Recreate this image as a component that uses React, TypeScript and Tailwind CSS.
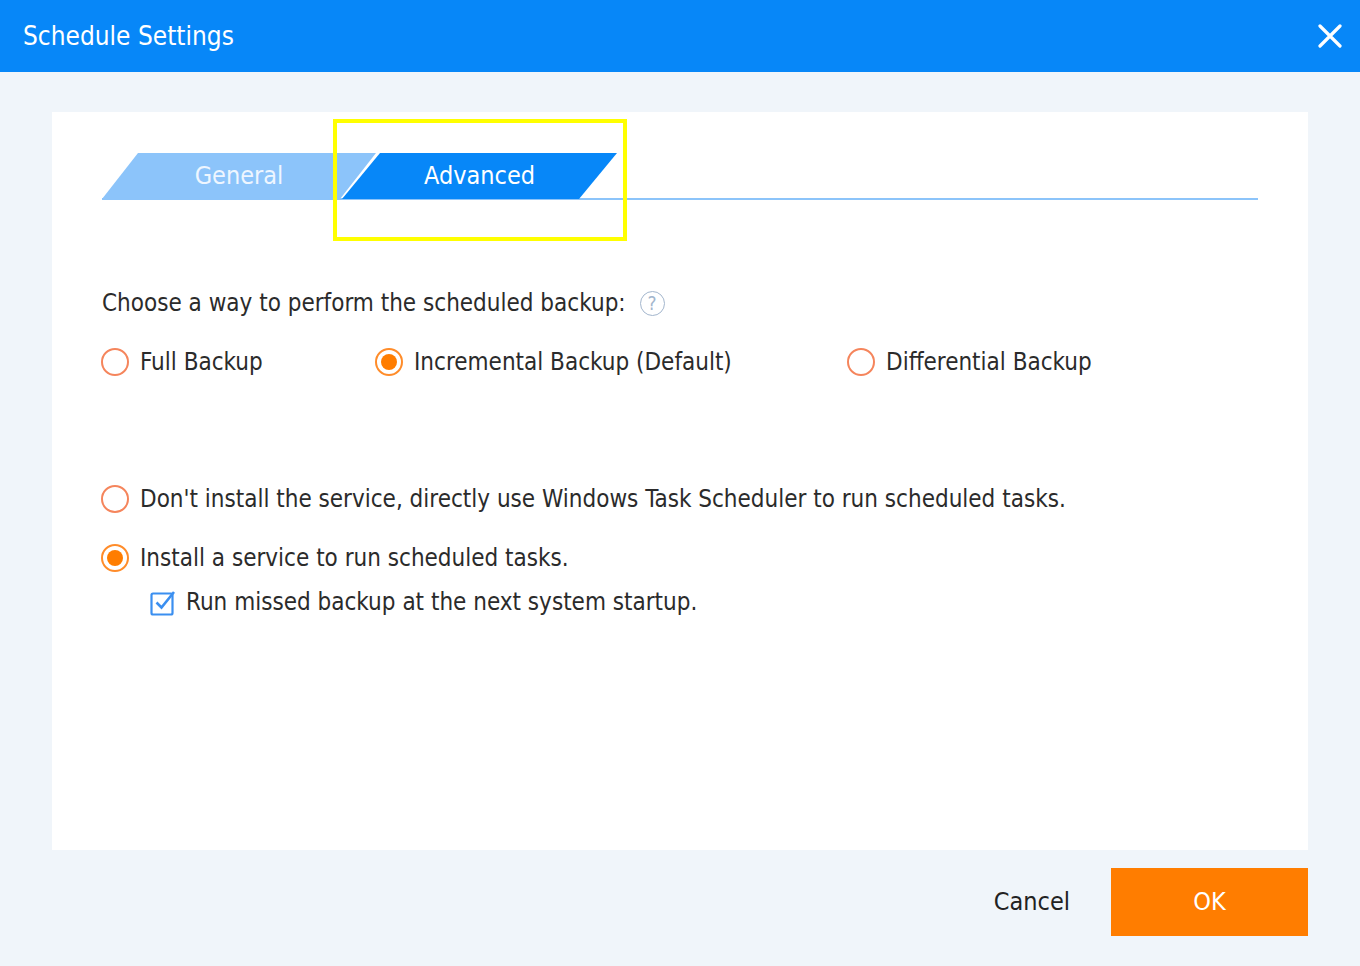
import React from "react";

const font = { fontFamily: '"DejaVu Sans", Verdana, sans-serif' };

function Radio({ checked }: { checked?: boolean }) {
  return checked ? (
    <span className="flex h-[28px] w-[28px] shrink-0 items-center justify-center rounded-full border-2 border-[#ff8c2a] bg-white">
      <span className="h-[16px] w-[16px] rounded-full bg-[#ff7d00]" />
    </span>
  ) : (
    <span className="h-[28px] w-[28px] shrink-0 rounded-full border-2 border-[#f5855c] bg-white" />
  );
}

function Checkbox() {
  return (
    <svg width="27" height="27" viewBox="0 0 27 27" className="shrink-0">
      <rect x="1.5" y="4.5" width="21" height="21" rx="1.5" fill="none" stroke="#3b8ff0" strokeWidth="2.2" />
      <path d="M6.5 13.5 L11.5 18.5 L24 3" fill="none" stroke="#3b8ff0" strokeWidth="2.6" />
    </svg>
  );
}

export default function App() {
  return (
    <div
      className="flex h-[966px] w-[1360px] flex-col bg-[#f0f5fa] font-stretch-condensed text-[#2b2b2b]"
      style={font}
    >
      <div className="flex h-[72px] shrink-0 items-center justify-between bg-[#0787f8] pl-[23px] pr-[18px]">
        <span className="text-[26px] leading-none text-white">Schedule Settings</span>
        <svg width="24" height="24" viewBox="0 0 24 24">
          <path d="M2 2 L22 22 M22 2 L2 22" stroke="white" strokeWidth="3.2" strokeLinecap="round" />
        </svg>
      </div>

      <div className="px-[52px] pt-[40px]">
        <div className="relative h-[738px] bg-white px-[50px] pt-[41px]">
          {/* Tabs */}
          <div className="flex h-[47px] border-b-2 border-[#8cc4fa]">
            <div className="flex h-[46px] w-[274px] items-center justify-center bg-[#8cc4fa] text-[25px] text-[#eef6ff] [clip-path:polygon(36px_0,100%_0,calc(100%-36px)_100%,0_100%)]">
              General
            </div>
            <div className="-ml-[34px] flex h-[46px] w-[275px] items-center justify-center bg-[#0787f8] text-[25px] text-white [clip-path:polygon(38px_0,100%_0,calc(100%-38px)_100%,0_100%)]">
              Advanced
            </div>
          </div>

          <div className="pointer-events-none absolute left-[281px] top-[7px] h-[122px] w-[294px] border-4 border-[#ffff00]" />

          <div className="mt-[88px] flex h-[30px] items-center text-[24px]">
            <span>Choose a way to perform the scheduled backup:</span>
            <span className="ml-[14px] flex h-[25px] w-[25px] items-center justify-center rounded-full border-[1.5px] border-[#a3b6cd] text-[19px] leading-none text-[#a3b6cd]">
              ?
            </span>
          </div>

          <div className="mt-[29px] flex h-[30px] items-center text-[24px]">
            <div className="-ml-[1px] flex w-[274px] items-center gap-[11px]">
              <Radio />
              <span>Full Backup</span>
            </div>
            <div className="flex w-[472px] items-center gap-[11px]">
              <Radio checked />
              <span>Incremental Backup (Default)</span>
            </div>
            <div className="flex items-center gap-[11px]">
              <Radio />
              <span>Differential Backup</span>
            </div>
          </div>

          <div className="-ml-[1px] mt-[107px] flex h-[30px] items-center gap-[11px] text-[24px]">
            <Radio />
            <span>Don't install the service, directly use Windows Task Scheduler to run scheduled tasks.</span>
          </div>
          <div className="-ml-[1px] mt-[29px] flex h-[30px] items-center gap-[11px] text-[24px]">
            <Radio checked />
            <span>Install a service to run scheduled tasks.</span>
          </div>
          <div className="ml-[48px] mt-[14px] flex h-[30px] items-center gap-[9px] text-[24px]">
            <Checkbox />
            <span>Run missed backup at the next system startup.</span>
          </div>
        </div>
      </div>

      <div className="flex items-center justify-end pr-[52px] pt-[18px]">
        <span className="mr-[41px] text-[25px] text-[#222]">Cancel</span>
        <div className="flex h-[68px] w-[197px] items-center justify-center bg-[#ff7d00] text-[25px] text-white">
          OK
        </div>
      </div>
    </div>
  );
}
